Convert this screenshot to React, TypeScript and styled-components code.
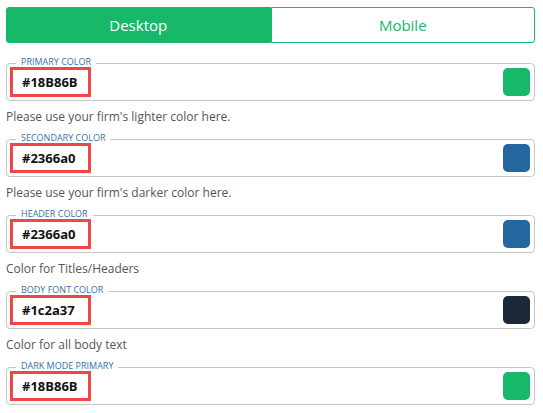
import React from "react";
import styled, { createGlobalStyle } from "styled-components";

const Global = createGlobalStyle`
  html, body { margin: 0; padding: 0; background: #fff; }
  body { font-family: "Open Sans", "Noto Sans", sans-serif; }
  * { box-sizing: border-box; }
`;

const Page = styled.div`
  width: 543px;
  padding: 7px 8px 0 6px;
  display: flex;
  flex-direction: column;
`;

const Tabs = styled.div`
  display: flex;
  height: 36px;
  margin-bottom: 20px;
`;

const Tab = styled.button<{ $active?: boolean }>`
  flex: 1;
  height: 36px;
  border: 1px solid #18b86b;
  background: ${(p) => (p.$active ? "#18b86b" : "#fff")};
  color: ${(p) => (p.$active ? "#fff" : "#18b86b")};
  font-family: "Open Sans", sans-serif;
  font-size: 15px;
  padding: 0;
  cursor: pointer;
  &:first-child { border-radius: 3px 0 0 3px; }
  &:last-child { border-radius: 0 3px 3px 0; }
`;

const Box = styled.div`
  position: relative;
  height: 38px;
  border: 1px solid #c6c6c6;
  border-radius: 4px;
  display: flex;
  align-items: center;
  justify-content: space-between;
  padding: 0 4px 0 3px;
`;

const Legend = styled.span`
  position: absolute;
  top: -7px;
  left: 9px;
  padding: 0 5px 0 5px;
  background: #fff;
  font-size: 9px;
  line-height: 9px;
  color: #3a6fa3;
  text-transform: uppercase;
`;

const Value = styled.div`
  width: 81px;
  height: 30px;
  border: 3px solid #f04646;
  display: flex;
  align-items: center;
  padding-left: 9px;
  font-size: 13px;
  font-weight: 700;
  color: #111;
`;

const Swatch = styled.div<{ $color: string }>`
  width: 27px;
  height: 28px;
  border-radius: 5px;
  background: ${(p) => p.$color};
`;

const Helper = styled.div`
  padding: 7px 0 13px;
  line-height: 18px;
  font-size: 12px;
  color: #555;
`;

const fields = [
  { label: "Primary Color", value: "#18B86B", color: "#18B86B", help: "Please use your firm's lighter color here." },
  { label: "Secondary Color", value: "#2366a0", color: "#2366a0", help: "Please use your firm's darker color here." },
  { label: "Header Color", value: "#2366a0", color: "#2366a0", help: "Color for Titles/Headers" },
  { label: "Body Font Color", value: "#1c2a37", color: "#1c2a37", help: "Color for all body text" },
  { label: "Dark Mode Primary", value: "#18B86B", color: "#18B86B", help: "" },
];

export default function App() {
  return (
    <>
      <Global />
      <Page>
        <Tabs>
          <Tab $active>Desktop</Tab>
          <Tab>Mobile</Tab>
        </Tabs>
        {fields.map((f) => (
          <React.Fragment key={f.label}>
            <Box>
              <Legend>{f.label}</Legend>
              <Value>{f.value}</Value>
              <Swatch $color={f.color} />
            </Box>
            {f.help && <Helper>{f.help}</Helper>}
          </React.Fragment>
        ))}
      </Page>
    </>
  );
}
